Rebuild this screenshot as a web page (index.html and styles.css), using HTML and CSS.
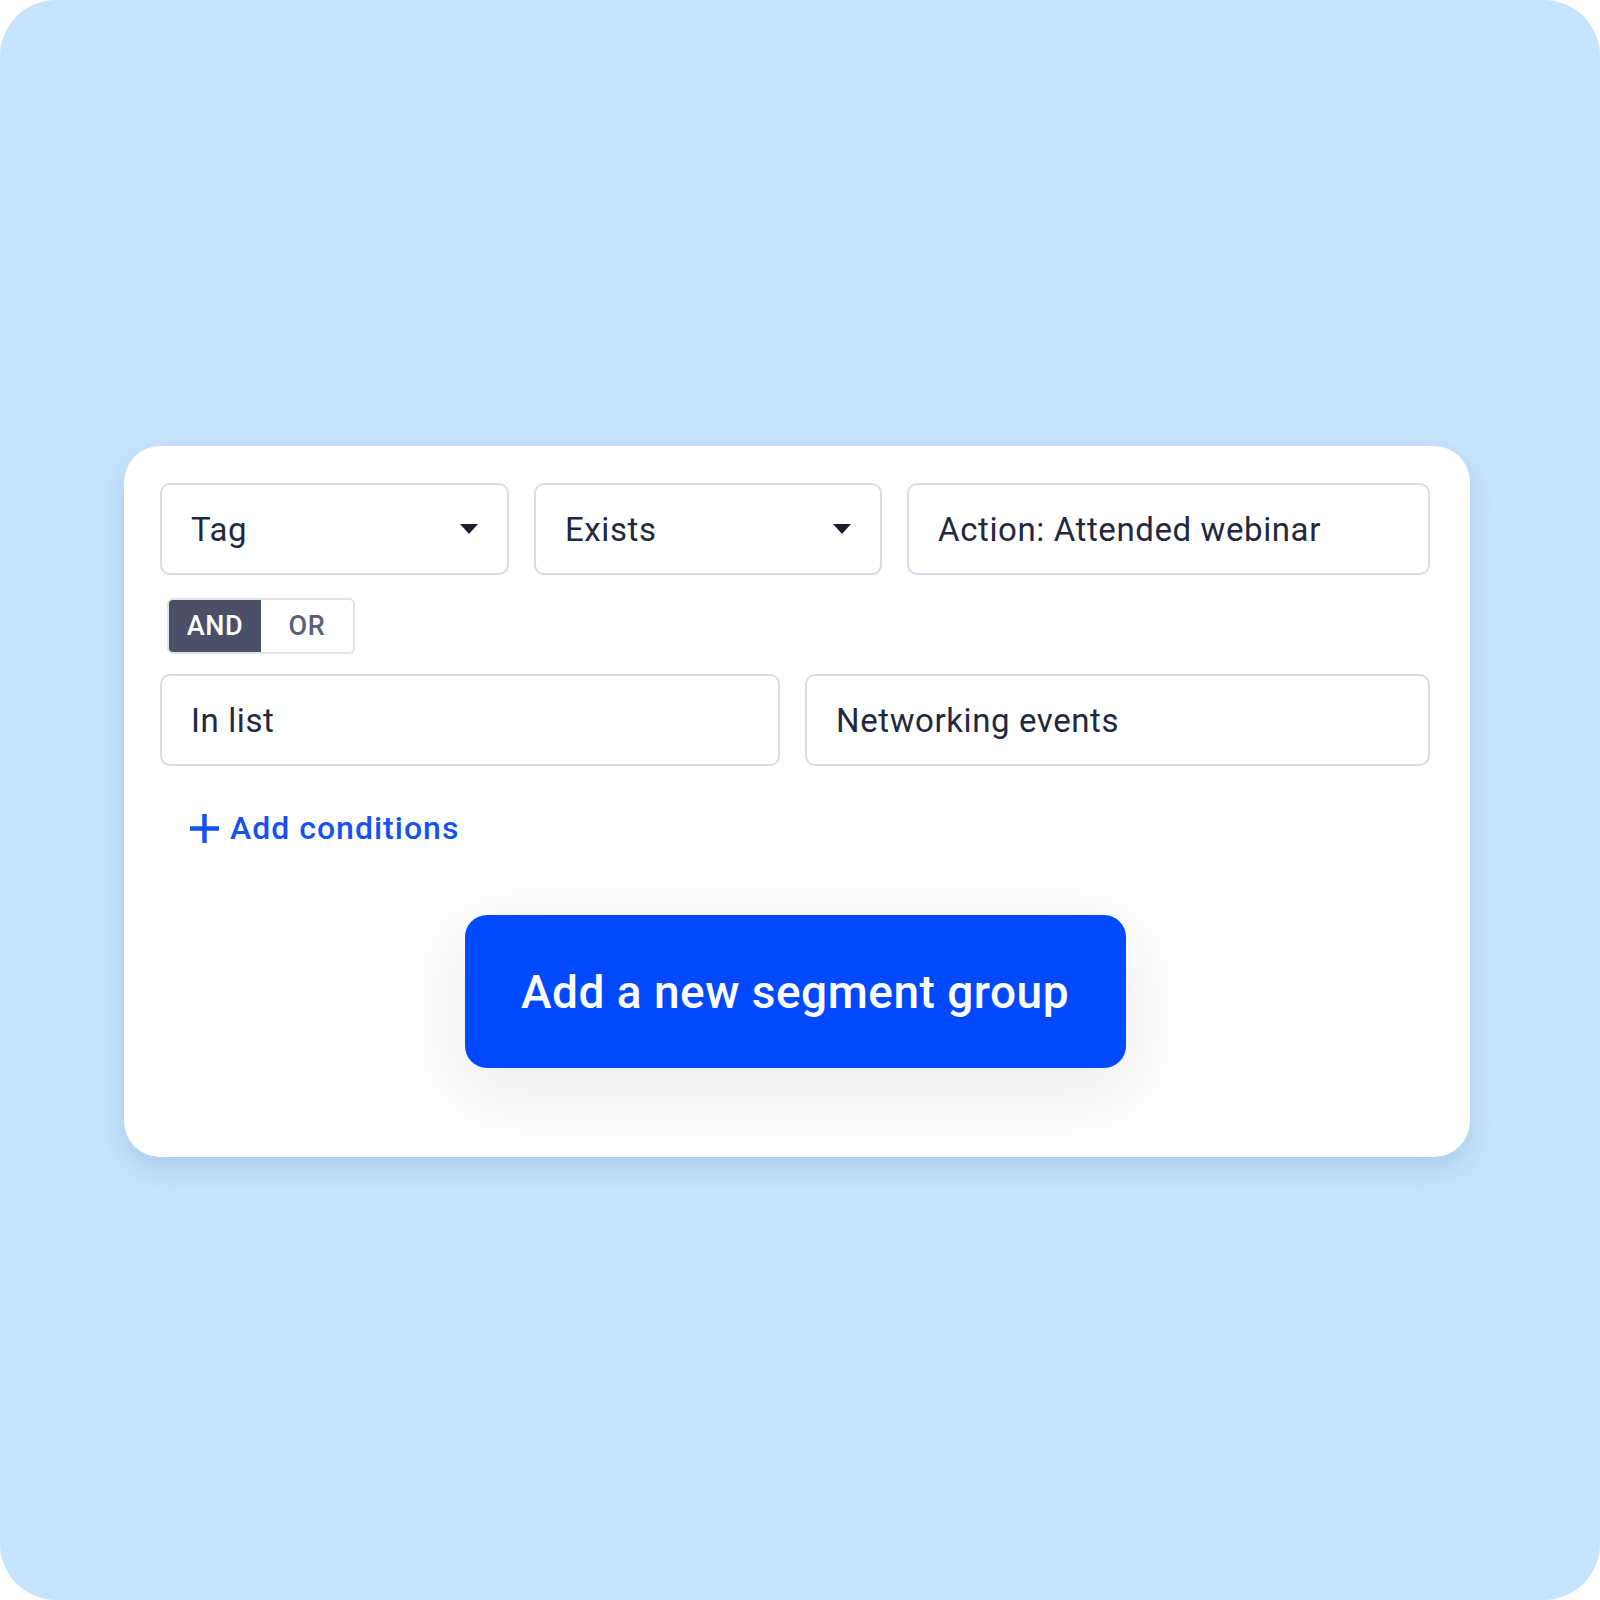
FILE: index.html
```html
<!DOCTYPE html>
<html lang="en">
<head>
    <meta charset="UTF-8">
    <meta name="viewport" content="width=device-width, initial-scale=1.0">
    <title>Segment builder</title>
    <link rel="stylesheet" href="styles.css">
</head>
<body>

<div class="frame">
    <div class="card">
        <div class="row row-three">
            <div class="field select">
                <span>Tag</span>
                <span class="caret"></span>
            </div>
            <div class="field select">
                <span>Exists</span>
                <span class="caret"></span>
            </div>
            <div class="field">
                <span>Action: Attended webinar</span>
            </div>
        </div>

        <div class="toggle">
            <div class="toggle-item active">AND</div>
            <div class="toggle-item">OR</div>
        </div>

        <div class="row row-two">
            <div class="field"><span>In list</span></div>
            <div class="field"><span>Networking events</span></div>
        </div>

        <div class="add-link">
            <svg width="29" height="29" viewBox="0 0 29 29">
                <path d="M14.5 0v29M0 14.5h29" stroke="#1652f0" stroke-width="4.5" fill="none"/>
            </svg>
            <span>Add conditions</span>
        </div>

        <div class="actions">
            <button class="primary">Add a new segment group</button>
        </div>
    </div>
</div>

</body>
</html>
```

FILE: styles.css
```css
body {
    margin: 0;
    background-color: #fff;
    font-family: Roboto, "Liberation Sans", Arial, sans-serif;
}
.frame {
    width: 1600px;
    height: 1600px;
    box-sizing: border-box;
    padding-top: 446px;
    padding-left: 124px;
    background-color: #c6e4fd;
    border-radius: 56px;
}
.card {
    width: 1346px;
    height: 711px;
    box-sizing: border-box;
    padding: 37px 40px 0 36px;
    background-color: #fff;
    border-radius: 36px;
    box-shadow: 0 12px 30px rgba(70, 120, 175, 0.22);
}
.row {
    display: grid;
    column-gap: 25px;
}
.row-three {
    grid-template-columns: 349px 348px 1fr;
}
.row-two {
    grid-template-columns: 620px 1fr;
    margin-top: 20px;
}
.field {
    height: 92px;
    box-sizing: border-box;
    border: 2px solid #d8dbe5;
    border-radius: 10px;
    padding: 0 29px;
    display: flex;
    align-items: center;
    justify-content: space-between;
    font-size: 33px;
    letter-spacing: 0.6px;
    color: #24283f;
}
.caret {
    width: 0;
    height: 0;
    border-left: 9.5px solid transparent;
    border-right: 9.5px solid transparent;
    border-top: 10px solid #1c1d2e;
}
.toggle {
    display: inline-flex;
    margin: 23px 0 0 7px;
    height: 56px;
    box-sizing: border-box;
    border: 2px solid #e1e3ea;
    border-radius: 6px;
    overflow: hidden;
}
.toggle-item {
    width: 92px;
    display: flex;
    align-items: center;
    justify-content: center;
    font-size: 27px;
    font-weight: 500;
    letter-spacing: 0.6px;
    color: #5b6078;
}
.toggle-item.active {
    background-color: #4a5068;
    color: #fff;
}
.add-link {
    display: flex;
    align-items: center;
    gap: 11px;
    margin: 44px 0 0 30px;
    height: 36px;
    font-size: 32px;
    font-weight: 500;
    letter-spacing: 1px;
    color: #1652f0;
}
.actions {
    display: flex;
    justify-content: center;
    margin-top: 69px;
}
.primary {
    width: 661px;
    height: 153px;
    border: none;
    border-radius: 22px;
    background-color: #0049ff;
    color: #fff;
    font-family: Roboto, "Liberation Sans", Arial, sans-serif;
    font-size: 46px;
    font-weight: 500;
    letter-spacing: 0.5px;
    box-shadow: 0 20px 70px rgba(30, 40, 70, 0.10);
    cursor: pointer;
}
```
